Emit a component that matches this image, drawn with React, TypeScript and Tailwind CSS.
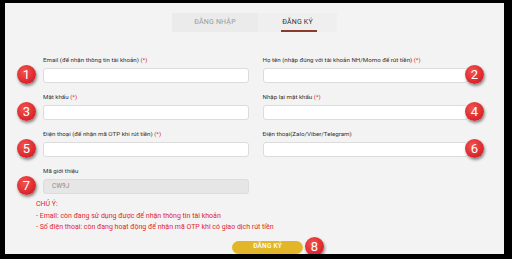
import React from 'react';

type Side = 'left' | 'right';

function Badge({ n, className }: { n: number; className: string }) {
  return (
    <span
      className={`absolute w-[19px] h-[19px] rounded-full bg-[radial-gradient(circle_at_40%_35%,#f2554f,#d8232a_70%,#b8181f)] shadow-[1px_2px_3px_rgba(0,0,0,0.45)] flex items-center justify-center text-white text-[13px] leading-none ${className}`}
    >
      {n}
    </span>
  );
}

interface FieldProps {
  label: string;
  required?: boolean;
  n: number;
  side: Side;
  value?: string;
  disabled?: boolean;
}

function Field({ label, required, n, side, value, disabled }: FieldProps) {
  return (
    <div className="flex flex-col">
      <div className="h-[10px] leading-[10px] text-[6.2px] text-[#333] mb-[3px] whitespace-nowrap">
        {label}
        {required && <span className="text-[#e0262c]"> (*)</span>}
      </div>
      <div className="relative">
        <div
          className={`h-[15px] rounded-[3px] border border-[#dcdcdc] flex items-center pl-[8px] text-[6.5px] text-[#8a8a8a] ${
            disabled ? 'bg-[#e6e6e6]' : 'bg-white'
          }`}
        >
          {value}
        </div>
        <Badge
          n={n}
          className={side === 'left' ? 'left-[-26px] top-[-3px]' : 'right-[-16px] top-[-3px]'}
        />
      </div>
    </div>
  );
}

export default function App() {
  return (
    <div className="w-[512px] h-[259px] bg-black pt-[3px] pl-[5px] pr-[8px] pb-[5px] font-['Roboto',sans-serif]">
      <div className="relative h-full bg-[#f3f3f3] overflow-hidden flex flex-col">
        <div className="mt-[10px] flex justify-center">
          <div className="w-[86px] h-[19px] bg-[#ebebeb] flex items-center justify-center text-[7px] text-[#9a9a9a] tracking-[0.2px]">
            ĐĂNG NHẬP
          </div>
          <div className="relative w-[79px] h-[19px] bg-[#efefef] flex items-center justify-center text-[7px] text-[#333] tracking-[0.2px]">
            ĐĂNG KÝ
            <span className="absolute bottom-[0px] left-[23px] w-[36px] h-[2px] bg-[#8a3b2b]" />
          </div>
        </div>

        <div className="mt-[23px] ml-[38px] mr-[36px] grid grid-cols-2 gap-x-[14px] gap-y-[9px]">
          <Field label="Email (để nhận thông tin tài khoản)" required n={1} side="left" />
          <Field label="Họ tên (nhập đúng với tài khoản NH/Momo để rút tiền)" required n={2} side="right" />
          <Field label="Mật khẩu" required n={3} side="left" />
          <Field label="Nhập lại mật khẩu" required n={4} side="right" />
          <Field label="Điện thoại (để nhận mã OTP khi rút tiền)" required n={5} side="left" />
          <Field label="Điện thoại(Zalo/Viber/Telegram)" n={6} side="right" />
          <Field label="Mã giới thiệu" n={7} side="left" value="CW9J" disabled />
        </div>

        <div className="mt-[5px] ml-[31px] text-[7px] leading-[11.5px] text-[#e0262c]">
          <p>CHÚ Ý:</p>
          <p>- Email: còn đang sử dụng được để nhận thông tin tài khoản</p>
          <p>- Số điện thoại: còn đang hoạt động để nhận mã OTP khi có giao dịch rút tiền</p>
        </div>

        <div className="mt-[7px] ml-[227px] relative w-[71px]">
          <button className="w-[71px] h-[13px] rounded-full bg-[#e3b62a] text-white text-[6.5px] font-medium tracking-[0.2px] flex items-center justify-center">
            ĐĂNG KÝ
          </button>
          <Badge n={8} className="left-[73px] top-[-4px]" />
        </div>
      </div>
    </div>
  );
}
